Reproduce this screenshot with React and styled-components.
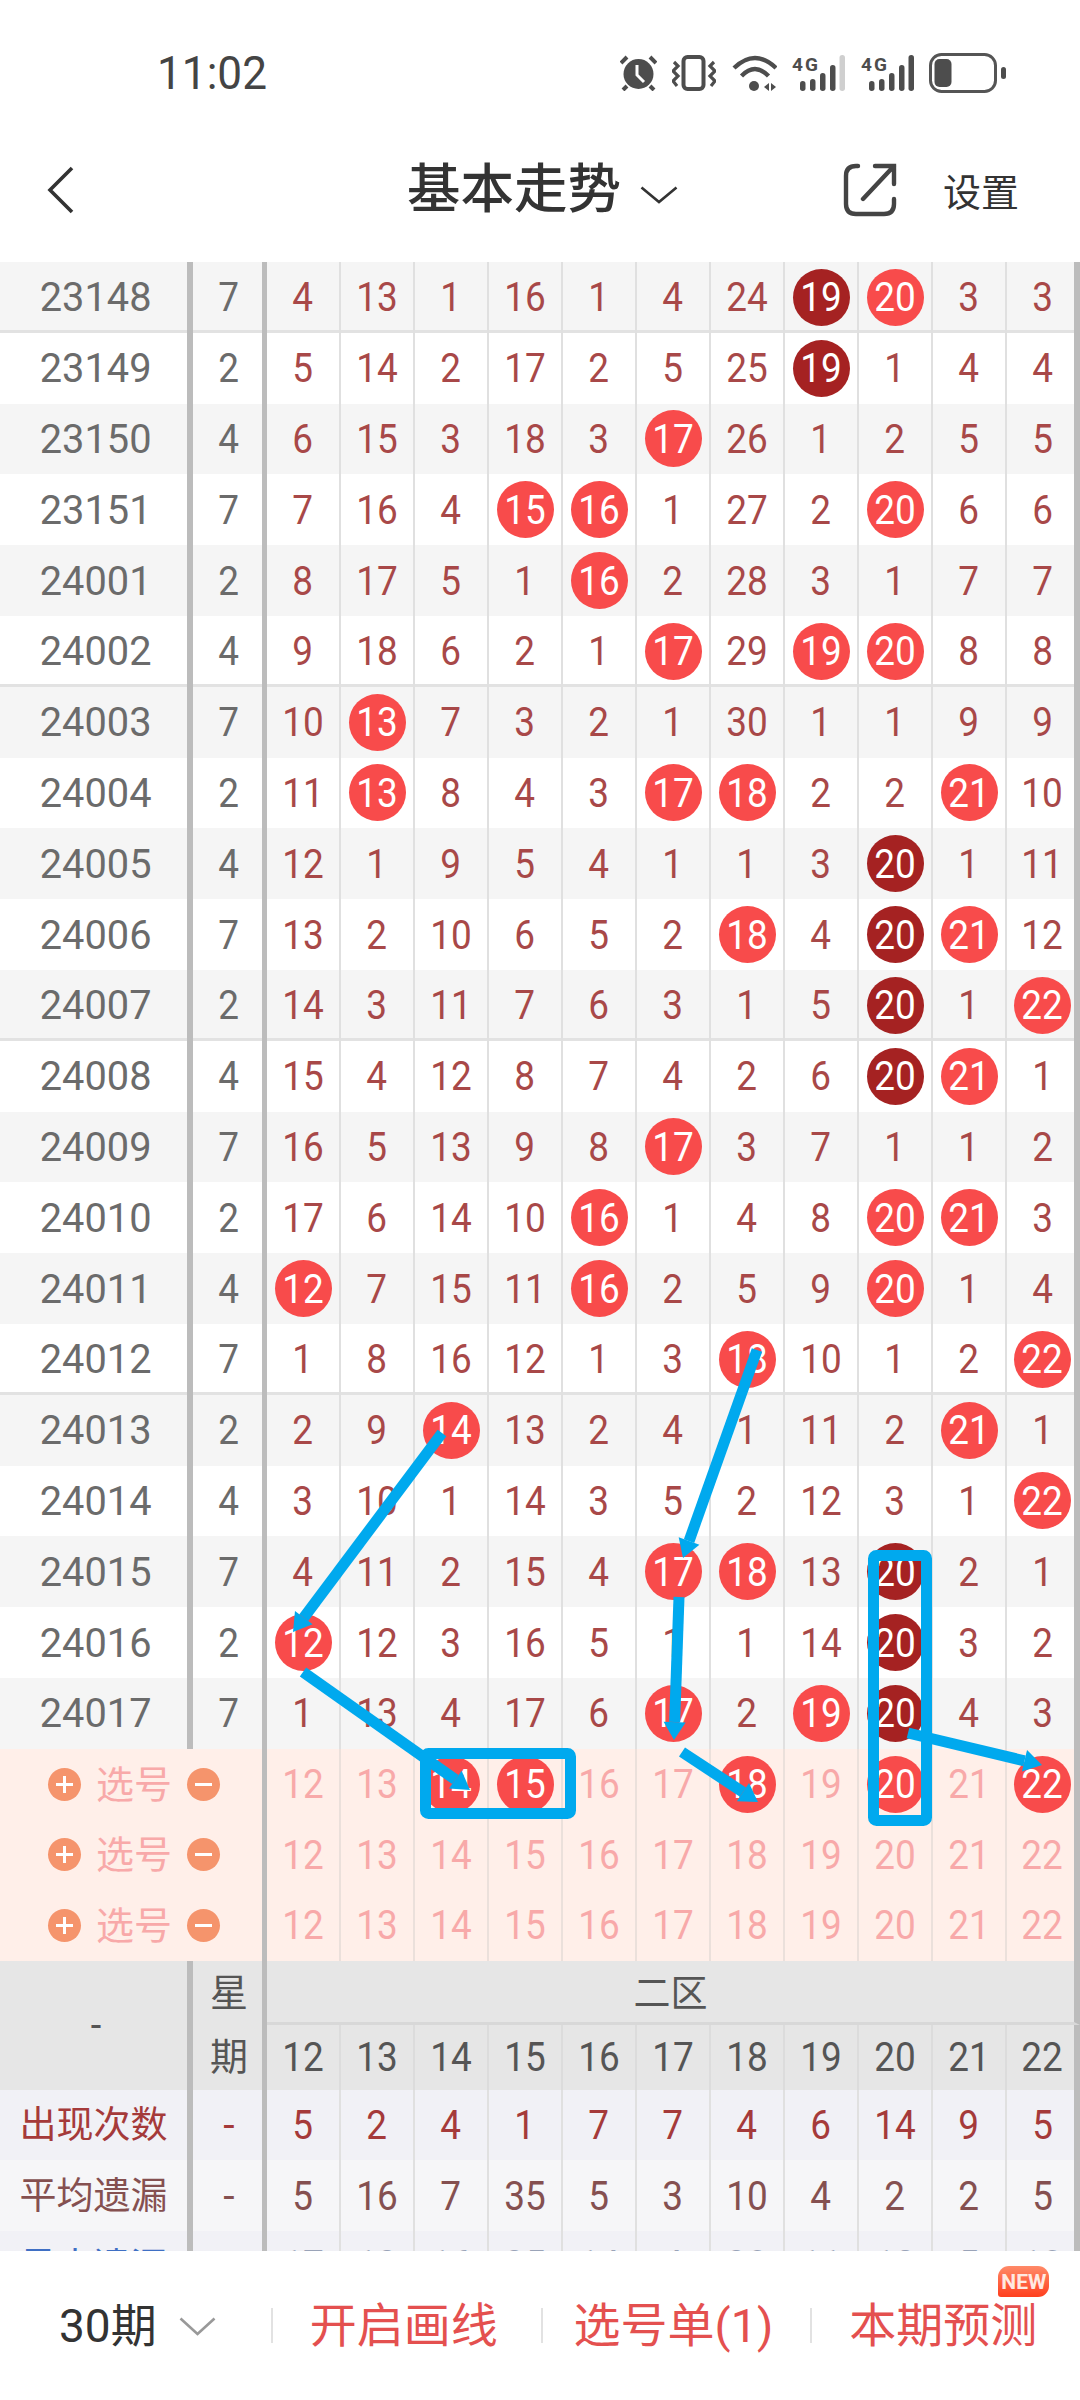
import React from "react";
import styled, { createGlobalStyle } from "styled-components";

const rows = [
  ["23148", 7, "4 13 1 16 1 4 24 19d 20b 3 3"],
  ["23149", 2, "5 14 2 17 2 5 25 19d 1 4 4"],
  ["23150", 4, "6 15 3 18 3 17b 26 1 2 5 5"],
  ["23151", 7, "7 16 4 15b 16b 1 27 2 20b 6 6"],
  ["24001", 2, "8 17 5 1 16b 2 28 3 1 7 7"],
  ["24002", 4, "9 18 6 2 1 17b 29 19b 20b 8 8"],
  ["24003", 7, "10 13b 7 3 2 1 30 1 1 9 9"],
  ["24004", 2, "11 13b 8 4 3 17b 18b 2 2 21b 10"],
  ["24005", 4, "12 1 9 5 4 1 1 3 20d 1 11"],
  ["24006", 7, "13 2 10 6 5 2 18b 4 20d 21b 12"],
  ["24007", 2, "14 3 11 7 6 3 1 5 20d 1 22b"],
  ["24008", 4, "15 4 12 8 7 4 2 6 20d 21b 1"],
  ["24009", 7, "16 5 13 9 8 17b 3 7 1 1 2"],
  ["24010", 2, "17 6 14 10 16b 1 4 8 20b 21b 3"],
  ["24011", 4, "12b 7 15 11 16b 2 5 9 20b 1 4"],
  ["24012", 7, "1 8 16 12 1 3 18b 10 1 2 22b"],
  ["24013", 2, "2 9 14b 13 2 4 1 11 2 21b 1"],
  ["24014", 4, "3 10 1 14 3 5 2 12 3 1 22b"],
  ["24015", 7, "4 11 2 15 4 17b 18b 13 20d 2 1"],
  ["24016", 2, "12b 12 3 16 5 1 1 14 20d 3 2"],
  ["24017", 7, "1 13 4 17 6 17b 2 19b 20d 4 3"],
];

const heads = [12, 13, 14, 15, 16, 17, 18, 19, 20, 21, 22];
const picks = [
  "12 13 14b 15b 16 17 18b 19 20b 21 22b",
  "12 13 14 15 16 17 18 19 20 21 22",
  "12 13 14 15 16 17 18 19 20 21 22",
];
const stats = [
  { label: "出现次数", tone: "red", bg: "#f1f1f6", values: [5, 2, 4, 1, 7, 7, 4, 6, 14, 9, 5] },
  { label: "平均遗漏", tone: "brown", bg: "#f6f6f8", values: [5, 16, 7, 35, 5, 3, 10, 4, 2, 2, 5] },
  { label: "最大遗漏", tone: "blue", numTone: "faint", bg: "#f1f1f6", lift: 3, values: [17, 13, 16, 35, 14, 4, 30, 11, 12, 5, 10] },
];

const arrows = [
  [442, 1433, 293, 1632],
  [757, 1350, 683, 1558],
  [679, 1597, 674, 1740],
  [303, 1672, 470, 1790],
  [682, 1752, 758, 1802],
  [908, 1733, 1042, 1765],
];

const toneColors = { red: "#a53a3a", brown: "#855050", blue: "#3f6fc4", faint: "#9aa3b8" };

const Global = createGlobalStyle`
  html, body { margin: 0; padding: 0; background: #fff; }
  body { font-family: Roboto, "Noto Sans CJK SC", sans-serif; }
  * { box-sizing: border-box; }
`;

const Page = styled.div`
  position: relative;
  width: 1080px;
  height: 2400px;
  overflow: hidden;
  display: flex;
  flex-direction: column;
  background: #fff;
`;

const StatusBar = styled.div`
  flex: none;
  height: 118px;
  padding: 28px 74px 0 157px;
  display: flex;
  align-items: center;
  justify-content: space-between;
`;

const Time = styled.span`
  font-size: 46px;
  color: #444;
  display: inline-block;
  transform: scaleX(0.96);
  transform-origin: left center;
`;

const StatusIcons = styled.div`
  display: flex;
  align-items: center;
  gap: 15.5px;
`;

const NavBar = styled.div`
  flex: none;
  height: 144px;
  display: flex;
  align-items: center;
`;

const BackSlot = styled.div`
  width: 407px;
  padding-left: 47px;
  display: flex;
`;

const TitleGroup = styled.div`
  width: 436px;
  display: flex;
  align-items: center;
  gap: 19px;
`;

const Title = styled.span`
  font-size: 53.5px;
  font-weight: 500;
  color: #333;
  line-height: 1;
`;

const TitleChevron = styled.span`
  display: flex;
  margin-top: 10px;
`;

const NavRight = styled.div`
  display: flex;
  align-items: center;
  gap: 46px;
`;

const Setting = styled.span`
  font-size: 38px;
  color: #333;
  padding-bottom: 2px;
`;

const Board = styled.div`
  flex: 1;
  min-height: 0;
  overflow: hidden;
`;

const Row = styled.div`
  display: grid;
  grid-template-columns: 193px 74px repeat(10, 74px) 1fr;
  height: ${(p) => p.$h || 70.8}px;
  background: ${(p) => p.$bg || "#fff"};
`;

const Cell = styled.div`
  display: flex;
  align-items: center;
  justify-content: center;
  border-right: 2px solid ${(p) => p.$line || "#e0e0e0"};
  box-shadow: ${(p) => (p.$thick ? "inset 0 -3px 0 #e2e2e2" : "none")};
  color: ${(p) => p.$color || "#a84848"};
  font-size: 41px;
  padding-bottom: ${(p) => p.$lift || 0}px;
  &:last-child {
    border-right: 6px solid #bcbcbc;
    padding-left: 4px;
  }
`;

const FirstCell = styled(Cell)`
  border-right: 6px solid #bcbcbc;
  padding-left: ${(p) => (p.$flush ? 0 : 5)}px;
  color: ${(p) => p.$color || "#6b6b6b"};
`;

const SecondCell = styled(Cell)`
  border-right: 5px solid #bcbcbc;
  padding-left: 3px;
  color: ${(p) => p.$color || "#6b6b6b"};
`;

const Digits = styled.span`
  display: inline-block;
  transform: scaleX(${(p) => p.$sx || 0.9});
`;

const Ball = styled.span`
  width: 57px;
  height: 57px;
  border-radius: 50%;
  display: flex;
  align-items: center;
  justify-content: center;
  background: ${(p) => (p.$dark ? "#a52222" : "#f84b4b")};
  color: #fff;
`;

const PickLabel = styled.div`
  grid-column: 1 / 3;
  border-right: 5px solid #bcbcbc;
  display: flex;
  align-items: center;
  padding-left: 48px;
`;

const PickText = styled.span`
  font-size: 38px;
  color: #f8a9a9;
  margin: 0 15px;
  padding-bottom: 6px;
`;

const RoundBtn = styled.span`
  position: relative;
  width: 33px;
  height: 33px;
  border-radius: 50%;
  background: #f5946c;
  &::before {
    content: "";
    position: absolute;
    left: 8px;
    top: 15px;
    width: 17px;
    height: 3px;
    background: #fff;
  }
  &::after {
    content: "";
    display: ${(p) => (p.$plus ? "block" : "none")};
    position: absolute;
    left: 15px;
    top: 8px;
    width: 3px;
    height: 17px;
    background: #fff;
  }
`;

const HeadBlock = styled.div`
  display: grid;
  grid-template-columns: 193px 74px repeat(10, 74px) 1fr;
  grid-template-rows: 64px 65px;
  background: #e6e6e6;
`;

const CornerCell = styled(FirstCell)`
  grid-row: 1 / 3;
  color: #555;
  font-size: 38px;
`;

const WeekHead = styled(SecondCell)`
  grid-row: 1 / 3;
  flex-direction: column;
  justify-content: space-around;
  color: #555;
  font-size: 38px;
  line-height: 1;
`;

const ZoneHead = styled.div`
  grid-column: 3 / -1;
  border-right: 6px solid #bcbcbc;
  border-bottom: 3px solid #d8d8d8;
  display: flex;
  align-items: center;
  justify-content: center;
  font-size: 37px;
  color: #555;
`;

const StatLabel = styled.span`
  font-size: 37px;
  padding-bottom: 6px;
`;

const Footer = styled.div`
  flex: none;
  height: 149px;
  display: flex;
  align-items: center;
  background: #fff;
`;

const PeriodPicker = styled.div`
  width: 271px;
  padding-left: 59px;
  display: flex;
  align-items: center;
  gap: 22px;
  font-size: 46px;
  color: #333;
`;

const PeriodText = styled.span`
  padding-bottom: 8px;
`;

const PeriodChevron = styled.span`
  display: flex;
  margin-top: 2px;
`;

const FooterAction = styled.div`
  position: relative;
  flex: 1;
  height: 35px;
  border-left: 2px solid #e2e2e2;
  padding-right: 6px;
  display: flex;
  align-items: center;
  justify-content: center;
  font-size: 47px;
  color: #e4504f;
  white-space: nowrap;
`;

const ActionText = styled.span`
  padding-bottom: 9px;
`;

const NewBadge = styled.span`
  position: absolute;
  left: 186px;
  top: -42px;
  width: 51px;
  height: 31px;
  border-radius: 11px 11px 11px 3px;
  background: linear-gradient(180deg, #ff8a68, #ff3f1e);
  color: #ffe9e2;
  font-size: 21px;
  font-weight: 700;
  display: flex;
  align-items: center;
  justify-content: center;
`;

const Overlay = styled.svg`
  position: absolute;
  left: 0;
  top: 0;
  pointer-events: none;
`;

const Alarm = () => (
  <svg width="37" height="36" viewBox="0 0 37 36">
    <circle cx="18.5" cy="19" r="15" fill="#4d4d4d" />
    <path d="M17 10V20L24 27" fill="none" stroke="#fff" strokeWidth="3" />
    <path d="M1 8L7 2M30 2L36 8M3 35L7 31M34 35L30 31" stroke="#4d4d4d" strokeWidth="4" />
  </svg>
);

const Vibrate = () => (
  <svg width="44" height="36" viewBox="0 0 44 36" fill="none" stroke="#4d4d4d">
    <rect x="11.5" y="2" width="20" height="32" rx="4" strokeWidth="4" />
    <path d="M2 7L6 11L1 16L6 21L1 26L5 31M42 7L38 11L43 16L38 21L43 26L39 31" strokeWidth="3.2" />
  </svg>
);

const Wifi = () => (
  <svg width="45" height="36" viewBox="0 0 45 36" fill="none">
    <path d="M2 13Q23 -7 44 13M9.5 21Q23 7 36.5 21" stroke="#4d4d4d" strokeWidth="4.4" />
    <circle cx="22" cy="31" r="5" fill="#4d4d4d" />
    <path d="M32 32L37 28V36ZM39 28L44 32L39 36Z" fill="#4d4d4d" />
  </svg>
);

const Signal = ({ weak }) => (
  <svg width="53" height="36" viewBox="0 0 53 36">
    <text x="0" y="16" fontFamily="Roboto" fontSize="19" fontWeight="700" fill="#4d4d4d" textLength="26">
      4G
    </text>
    <rect x="8" y="26" width="5.5" height="10" rx="2.7" fill="#4d4d4d" />
    <rect x="18" y="24" width="5.5" height="12" rx="2.7" fill="#4d4d4d" />
    <rect x="28" y="18" width="5.5" height="18" rx="2.7" fill="#4d4d4d" />
    <rect x="38" y="10" width="5.5" height="26" rx="2.7" fill="#4d4d4d" />
    <rect x="47.5" y="0" width="5.5" height="36" rx="2.7" fill={weak ? "#cfcfcf" : "#4d4d4d"} />
  </svg>
);

const Battery = () => (
  <svg width="77" height="40" viewBox="0 0 77 40">
    <rect x="1.5" y="1.5" width="65" height="37" rx="11" fill="none" stroke="#555" strokeWidth="3" />
    <rect x="5.5" y="6" width="17" height="28" rx="5" fill="#4d4d4d" />
    <rect x="72" y="14" width="5" height="12" rx="2.5" fill="#4d4d4d" />
  </svg>
);

const BackIcon = () => (
  <svg width="28" height="48" viewBox="0 0 28 48" fill="none" stroke="#333" strokeWidth="3.6">
    <path d="M25 2L3 24L25 46" />
  </svg>
);

const Chevron = ({ w, h, color }) => (
  <svg width={w} height={h} viewBox={`0 0 ${w} ${h}`} fill="none" stroke={color} strokeWidth="2.6">
    <path d={`M1.5 1.5L${w / 2} ${h - 2}L${w - 1.5} 1.5`} />
  </svg>
);

const ShareIcon = () => (
  <svg width="54" height="54" viewBox="0 0 54 54" fill="none" stroke="#444" strokeWidth="4.4" strokeLinecap="round">
    <path d="M15 3H13Q3 3 3 13V41Q3 51 13 51H41Q51 51 51 41V36" />
    <path d="M20 36L51 3M32 3H51V21" />
  </svg>
);

const Arrow = ({ from }) => {
  const [x1, y1, x2, y2] = from;
  const len = Math.hypot(x2 - x1, y2 - y1);
  const ux = (x2 - x1) / len;
  const uy = (y2 - y1) / len;
  const bx = x2 - ux * 18;
  const by = y2 - uy * 18;
  const wing = `${bx - uy * 11},${by + ux * 11} ${bx + uy * 11},${by - ux * 11}`;
  return (
    <g fill="#00a9ee">
      <line x1={x1} y1={y1} x2={bx} y2={by} stroke="#00a9ee" strokeWidth="11" />
      <polygon points={`${x2},${y2} ${wing}`} />
    </g>
  );
};

const Value = ({ raw }) => {
  const text = String(raw);
  const kind = text.slice(-1);
  if (kind === "b" || kind === "d") {
    return (
      <Ball $dark={kind === "d"}>
        <Digits>{text.slice(0, -1)}</Digits>
      </Ball>
    );
  }
  return <Digits>{text}</Digits>;
};

export default function App() {
  return (
    <Page>
      <Global />
      <StatusBar>
        <Time>11:02</Time>
        <StatusIcons>
          <Alarm />
          <Vibrate />
          <Wifi />
          <Signal weak />
          <Signal />
          <Battery />
        </StatusIcons>
      </StatusBar>
      <NavBar>
        <BackSlot>
          <BackIcon />
        </BackSlot>
        <TitleGroup>
          <Title>基本走势</Title>
          <TitleChevron>
            <Chevron w={38} h={18} color="#333" />
          </TitleChevron>
        </TitleGroup>
        <NavRight>
          <ShareIcon />
          <Setting>设置</Setting>
        </NavRight>
      </NavBar>
      <Board>
        {rows.map(([period, week, nums], i) => {
          const thick = i === 0 || i === 5 || i === 10 || i === 15;
          return (
            <Row key={period} $bg={i % 2 === 0 ? "#f5f5f5" : "#fff"}>
              <FirstCell $thick={thick}>
                <Digits $sx={0.97}>{period}</Digits>
              </FirstCell>
              <SecondCell $thick={thick}>
                <Digits>{week}</Digits>
              </SecondCell>
              {nums.split(" ").map((n, j) => (
                <Cell key={j} $thick={thick}>
                  <Value raw={n} />
                </Cell>
              ))}
            </Row>
          );
        })}
        {picks.map((nums, i) => (
          <Row key={i} $h={70.6} $bg="#ffefe9">
            <PickLabel>
              <RoundBtn $plus />
              <PickText>选号</PickText>
              <RoundBtn />
            </PickLabel>
            {nums.split(" ").map((n, j) => (
              <Cell key={j} $line="#ebe0db" $color="#f8a9a9">
                <Value raw={n} />
              </Cell>
            ))}
          </Row>
        ))}
        <HeadBlock>
          <CornerCell>-</CornerCell>
          <WeekHead>
            <span>星</span>
            <span>期</span>
          </WeekHead>
          <ZoneHead>二区</ZoneHead>
          {heads.map((h) => (
            <Cell key={h} $color="#555" $line="#dcdcdc">
              <Digits>{h}</Digits>
            </Cell>
          ))}
        </HeadBlock>
        {stats.map((s) => (
          <Row key={s.label} $bg={s.bg}>
            <FirstCell $flush $color={toneColors[s.tone]}>
              <StatLabel>{s.label}</StatLabel>
            </FirstCell>
            <SecondCell $color={toneColors[s.numTone || s.tone]} $lift={s.lift}>
              -
            </SecondCell>
            {s.values.map((v, j) => (
              <Cell key={j} $color={toneColors[s.numTone || s.tone]} $lift={s.lift}>
                <Digits>{v}</Digits>
              </Cell>
            ))}
          </Row>
        ))}
      </Board>
      <Footer>
        <PeriodPicker>
          <PeriodText>30期</PeriodText>
          <PeriodChevron>
            <Chevron w={37} h={19} color="#999" />
          </PeriodChevron>
        </PeriodPicker>
        <FooterAction>
          <ActionText>开启画线</ActionText>
        </FooterAction>
        <FooterAction>
          <ActionText>选号单(1)</ActionText>
        </FooterAction>
        <FooterAction>
          <ActionText>本期预测</ActionText>
          <NewBadge>NEW</NewBadge>
        </FooterAction>
      </Footer>
      <Overlay width="1080" height="2400" viewBox="0 0 1080 2400">
        {arrows.map((a, i) => (
          <Arrow key={i} from={a} />
        ))}
        <rect x="425.5" y="1753.5" width="145" height="60" rx="3" fill="none" stroke="#00a9ee" strokeWidth="11" />
        <rect x="873.5" y="1555.5" width="53" height="265" rx="3" fill="none" stroke="#00a9ee" strokeWidth="11" />
      </Overlay>
    </Page>
  );
}
